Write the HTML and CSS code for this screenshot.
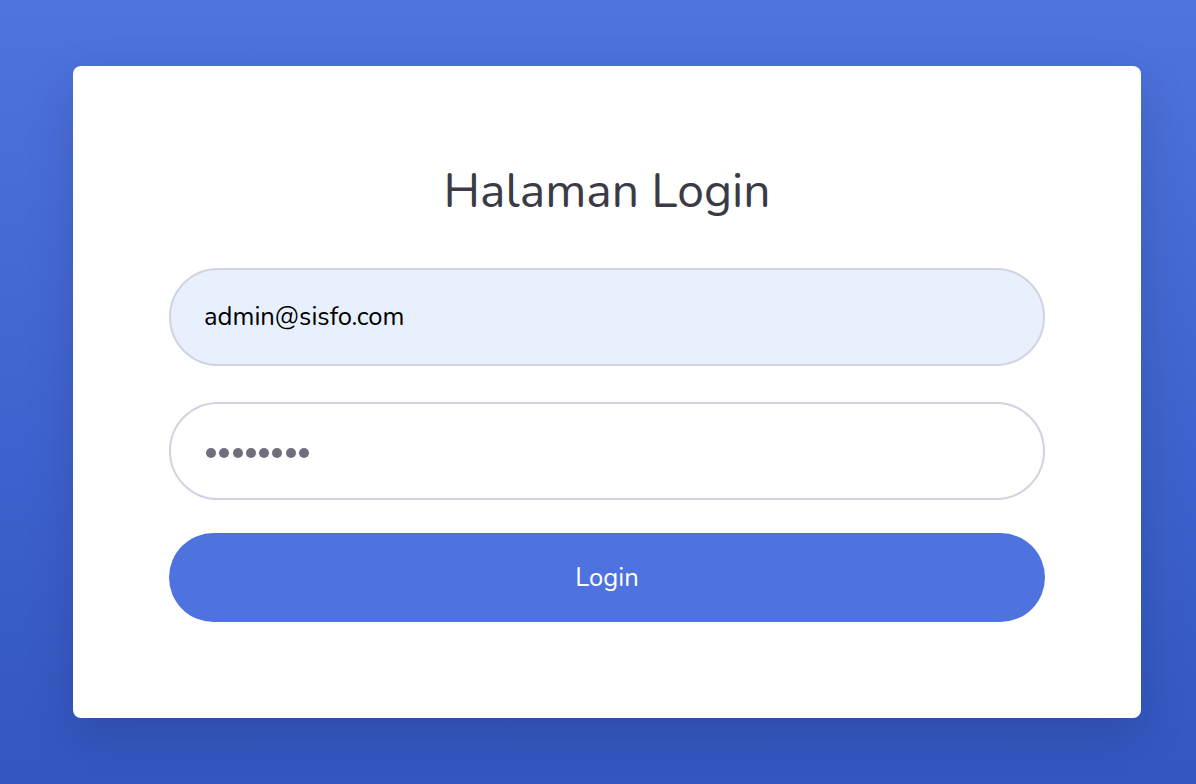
FILE: index.html
```html
<!DOCTYPE html>
<html lang="id">
<head>
<meta charset="utf-8">
<title>Halaman Login</title>
<link rel="stylesheet" href="styles.css">
</head>
<body>
<main class="page">
  <section class="card">
    <h1 class="title">Halaman Login</h1>
    <form class="form">
      <div class="field field-filled">admin@sisfo.com</div>
      <div class="field field-pass" aria-label="password">
        <span class="dot"></span><span class="dot"></span><span class="dot"></span><span class="dot"></span><span class="dot"></span><span class="dot"></span><span class="dot"></span><span class="dot"></span>
      </div>
      <button type="button" class="btn">Login</button>
    </form>
  </section>
</main>
</body>
</html>
```
FILE: styles.css
```css
html, body {
  margin: 0;
  padding: 0;
}
body {
  width: 1196px;
  height: 784px;
  overflow: hidden;
  background: linear-gradient(180deg, #4e74de 0%, #4a6fd9 15%, #3d62cd 60%, #3356c0 100%);
  font-family: "Nunito", "Lato", "Noto Sans", sans-serif;
}
.page {
  padding: 66px 55px 0 73px;
}
.card {
  width: 1068px;
  height: 652px;
  box-sizing: border-box;
  background: #fff;
  border-radius: 8px;
  box-shadow: 0 16px 48px rgba(0, 0, 0, 0.15);
  padding: 96px 96px;
}
.title {
  margin: 0 0 48px 0;
  text-align: center;
  font-weight: 400;
  font-size: 48px;
  line-height: 58px;
  color: #3a3b45;
}
.form {
  display: flex;
  flex-direction: column;
}
.field {
  height: 98px;
  box-sizing: border-box;
  border: 2px solid #d1d3e2;
  border-radius: 49px;
  padding: 0 33px;
  display: flex;
  align-items: center;
  font-size: 25.6px;
  color: #000;
}
.field-filled {
  background: #e8f0fe;
  margin-bottom: 36px;
  padding-bottom: 2px;
}
.field-pass {
  background: #fff;
  margin-bottom: 33px;
  gap: 3.3px;
  padding-left: 35px;
  padding-top: 4px;
}
.dot {
  width: 10px;
  height: 10px;
  border-radius: 50%;
  background: #6e707e;
}
.btn {
  height: 89px;
  border: none;
  border-radius: 45px;
  background: #4e73df;
  color: #fff;
  font-family: inherit;
  font-size: 25.6px;
  cursor: pointer;
}
```
